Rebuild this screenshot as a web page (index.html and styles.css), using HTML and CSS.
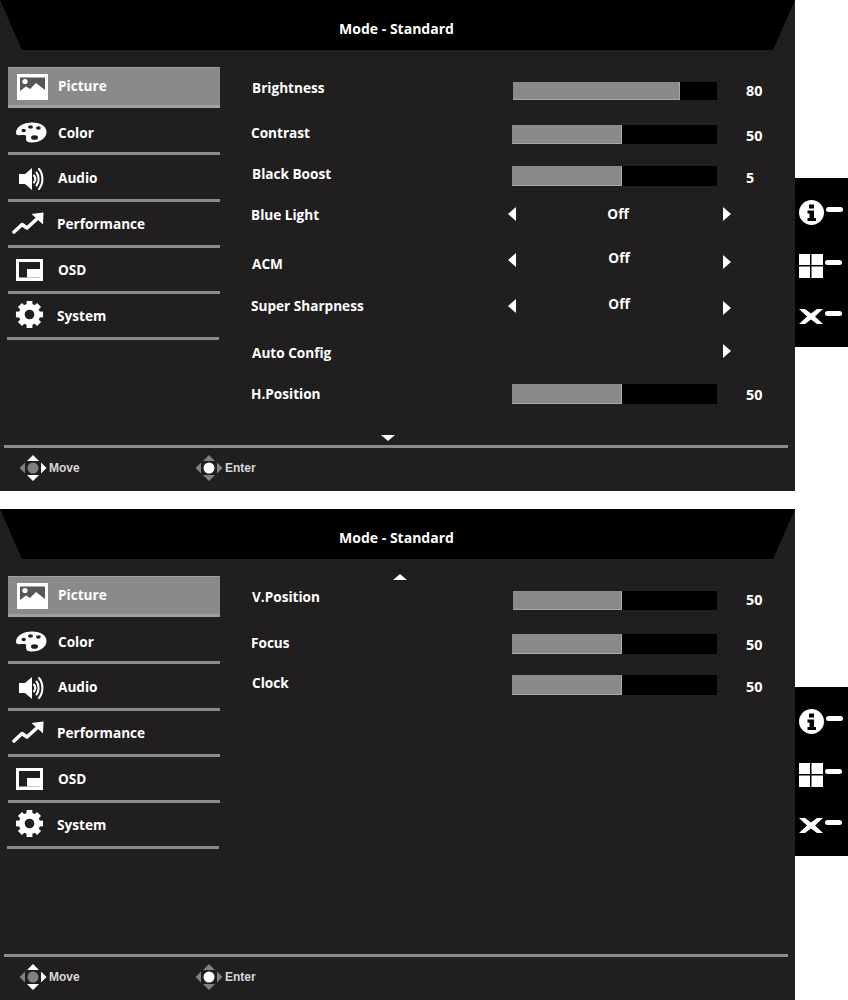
FILE: index.html
```html
<!DOCTYPE html>
<html lang="en">
<head>
<meta charset="utf-8">
<title>Monitor OSD - Picture</title>
<link rel="stylesheet" href="styles.css">
</head>
<body>
<svg class="sprite" width="0" height="0" aria-hidden="true">
  <symbol id="i-picture" viewBox="0 0 31 26">
    <rect width="31" height="26" fill="#fff"/>
    <rect x="3" y="3.500" width="25" height="15" fill="#55565a"/>
    <circle cx="8" cy="7.500" r="2.600" fill="#fff"/>
    <path d="M3 17 9 12.500 13 15 19 9 28 16V23H3Z" fill="#fff"/>
  </symbol>
  <symbol id="i-palette" viewBox="0 0 32 21">
    <path fill-rule="evenodd" fill="#fff" d="M1 11C1 5 8 .5 17 .5 26 .5 31.500 4.500 31.500 10 31.500 16 25 20.500 17 20.500 13.500 20.500 11 19.500 11 17 11 14.500 12 13.500 9.500 13 6.500 12.500 1 14.500 1 11ZM6.500 8.500a2.200 1.800 0 1 0 4.400 0a2.200 1.800 0 1 0-4.400 0ZM13 5a2.500 1.800 0 1 0 5 0a2.500 1.800 0 1 0-5 0ZM21 6a2.400 1.800 0 1 0 4.800 0a2.400 1.800 0 1 0-4.800 0ZM16 15.500a3.500 2.300 0 1 0 7 0a3.500 2.300 0 1 0-7 0Z"/>
  </symbol>
  <symbol id="i-audio" viewBox="0 0 26 26">
    <path fill="#fff" d="M1 8H7L14 2V24L7 18H1Z"/>
    <g fill="none" stroke="#fff" stroke-width="2.100" stroke-linecap="round">
      <path d="M16 9.500C17.500 11.500 17.500 14.500 16 16.500"/>
      <path d="M18.500 6.500C21.300 10 21.300 16 18.500 19.500"/>
      <path d="M21 3C25.500 8.500 25.500 17.500 21 23"/>
    </g>
  </symbol>
  <symbol id="i-perf" viewBox="0 0 32 22">
    <path fill="none" stroke="#fff" stroke-width="3.600" stroke-linecap="round" stroke-linejoin="round" d="M2 20 10 12.500 15 16 27 5"/>
    <path fill="#fff" d="M19.500 2 31.500 .5 31 12.500Z"/>
  </symbol>
  <symbol id="i-osd" viewBox="0 0 27 22">
    <path fill="#fff" fill-rule="evenodd" d="M0 0H27V22H0ZM3 3V18.500H24V3Z"/>
    <rect x="11" y="10" width="13" height="8.500" fill="#fff"/>
  </symbol>
  <symbol id="i-gear" viewBox="0 0 30 30">
    <circle cx="15" cy="15" r="8" fill="none" stroke="#fff" stroke-width="6"/>
    <g fill="#fff">
      <rect x="12" y="1" width="6" height="6"/>
      <rect x="12" y="23" width="6" height="6"/>
      <rect x="1" y="12" width="6" height="6"/>
      <rect x="23" y="12" width="6" height="6"/>
      <rect x="12" y="1" width="6" height="6" transform="rotate(45 15 15)"/>
      <rect x="12" y="23" width="6" height="6" transform="rotate(45 15 15)"/>
      <rect x="1" y="12" width="6" height="6" transform="rotate(45 15 15)"/>
      <rect x="23" y="12" width="6" height="6" transform="rotate(45 15 15)"/>
    </g>
  </symbol>
  <symbol id="i-info" viewBox="0 0 25 25">
    <circle cx="12.500" cy="12.500" r="12.500" fill="#fff"/>
    <rect x="10" y="4.500" width="5" height="4" fill="#000"/>
    <path fill="#000" d="M8.500 10.500H15V18H17V21H8.500V18H10.500V13.500H8.500Z"/>
  </symbol>
  <symbol id="i-grid" viewBox="0 0 24 24">
    <path fill="#fff" d="M0 0H11V11H0ZM12.500 0H24V11H12.500ZM0 12.500H11V24H0ZM12.500 12.500H24V24H12.500Z"/>
  </symbol>
  <symbol id="i-close" viewBox="0 0 24 15">
    <path fill="#fff" d="M0 0H6L12 4.500 18 0H24L16 7.500 24 15H18L12 10.500 6 15H0L8 7.500Z"/>
  </symbol>
  <symbol id="i-move" viewBox="0 0 28 28">
    <path fill="#fff" d="M14 1 20 7H8ZM14 27 8 21H20ZM27.500 14 22 8.500V19.500Z"/>
    <path fill="#808080" d="M.5 14 6 8.500V19.500Z"/>
    <circle cx="14" cy="14" r="5.500" fill="#808080"/>
  </symbol>
  <symbol id="i-enter" viewBox="0 0 28 28">
    <path fill="#808080" d="M14 1 20 7H8ZM14 27 8 21H20ZM27.500 14 22 8.500V19.500ZM.5 14 6 8.500V19.500Z"/>
    <circle cx="14" cy="14" r="5.500" fill="#fff"/>
  </symbol>
</svg>

<section class="shot">
  <div class="panel">
    <header class="title"><h1 class="title-text">Mode - Standard</h1></header>
    <div class="main">
      <nav class="menu">
        <div class="item selected"><svg class="ic ic-picture"><use href="#i-picture"/></svg><span>Picture</span></div>
        <div class="item it-color"><svg class="ic ic-palette"><use href="#i-palette"/></svg><span>Color</span></div>
        <div class="item it-audio"><svg class="ic ic-audio"><use href="#i-audio"/></svg><span>Audio</span></div>
        <div class="item it-perf"><svg class="ic ic-perf"><use href="#i-perf"/></svg><span>Performance</span></div>
        <div class="item it-osd"><svg class="ic ic-osd"><use href="#i-osd"/></svg><span>OSD</span></div>
        <div class="item it-sys"><svg class="ic ic-gear"><use href="#i-gear"/></svg><span>System</span></div>
      </nav>
      <div class="settings">
        <div class="row r-bright"><span class="label l1 up3">Brightness</span><div class="bar b1"><div class="fill f80"></div></div><span class="val">80</span></div>
        <div class="row r-contrast"><span class="label up1h">Contrast</span><div class="bar b2"><div class="fill f50"></div></div><span class="val down1h">50</span></div>
        <div class="row r-black"><span class="label l1 up2">Black Boost</span><div class="bar"><div class="fill f50"></div></div><span class="val down2">5</span></div>
        <div class="row r-blue"><span class="label down1">Blue Light</span><div class="opt"><i class="tri left"></i><span class="off">Off</span><i class="tri right"></i></div></div>
        <div class="row r-acm"><span class="label l1 down4">ACM</span><div class="opt"><i class="tri left"></i><span class="off off-shift up2">Off</span><i class="tri right down2"></i></div></div>
        <div class="row r-super"><span class="label">Super Sharpness</span><div class="opt"><i class="tri left"></i><span class="off off-shift up2">Off</span><i class="tri right down2"></i></div></div>
        <div class="row r-auto"><span class="label l1 down2">Auto Config</span><div class="opt"><i class="tri right alone"></i></div></div>
        <div class="row r-hpos"><span class="label">H.Position</span><div class="bar"><div class="fill f50"></div></div><span class="val down1">50</span></div>
        <i class="more more-down"></i>
      </div>
    </div>
    <footer class="foot">
      <div class="hint hint-move"><svg class="pad"><use href="#i-move"/></svg><span>Move</span></div>
      <div class="hint hint-enter"><svg class="pad"><use href="#i-enter"/></svg><span>Enter</span></div>
    </footer>
  </div>
  <aside class="keys">
    <div class="key k1"><svg class="k-ic k-info"><use href="#i-info"/></svg><b class="dash"></b></div>
    <div class="key k2"><svg class="k-ic k-grid"><use href="#i-grid"/></svg><b class="dash"></b></div>
    <div class="key k3"><svg class="k-ic k-close"><use href="#i-close"/></svg><b class="dash"></b></div>
  </aside>
</section>

<section class="shot second">
  <div class="panel">
    <header class="title"><h1 class="title-text">Mode - Standard</h1></header>
    <div class="main">
      <nav class="menu">
        <div class="item selected"><svg class="ic ic-picture"><use href="#i-picture"/></svg><span>Picture</span></div>
        <div class="item it-color"><svg class="ic ic-palette"><use href="#i-palette"/></svg><span>Color</span></div>
        <div class="item it-audio"><svg class="ic ic-audio"><use href="#i-audio"/></svg><span>Audio</span></div>
        <div class="item it-perf"><svg class="ic ic-perf"><use href="#i-perf"/></svg><span>Performance</span></div>
        <div class="item it-osd"><svg class="ic ic-osd"><use href="#i-osd"/></svg><span>OSD</span></div>
        <div class="item it-sys"><svg class="ic ic-gear"><use href="#i-gear"/></svg><span>System</span></div>
      </nav>
      <div class="settings settings-scrolled">
        <i class="more more-up"></i>
        <div class="row r-vpos"><span class="label l1 up4">V.Position</span><div class="bar b3"><div class="fill f50b"></div></div><span class="val val-up">50</span></div>
        <div class="row r-focus"><span class="label up1">Focus</span><div class="bar"><div class="fill f50"></div></div><span class="val down1">50</span></div>
        <div class="row r-clock"><span class="label l1 up2">Clock</span><div class="bar"><div class="fill f50"></div></div><span class="val down2">50</span></div>
      </div>
    </div>
    <footer class="foot">
      <div class="hint hint-move"><svg class="pad"><use href="#i-move"/></svg><span>Move</span></div>
      <div class="hint hint-enter"><svg class="pad"><use href="#i-enter"/></svg><span>Enter</span></div>
    </footer>
  </div>
  <aside class="keys">
    <div class="key k1"><svg class="k-ic k-info"><use href="#i-info"/></svg><b class="dash"></b></div>
    <div class="key k2"><svg class="k-ic k-grid"><use href="#i-grid"/></svg><b class="dash"></b></div>
    <div class="key k3"><svg class="k-ic k-close"><use href="#i-close"/></svg><b class="dash"></b></div>
  </aside>
</section>
</body>
</html>
```
FILE: styles.css
```css
* { box-sizing: border-box; }
html, body { margin: 0; padding: 0; background: #fff; }
body { width: 848px; height: 1000px; overflow: hidden; font-family: "Open Sans", "Liberation Sans", sans-serif; color: #fff; }
.sprite { display: block; width: 0; height: 0; }

.shot { display: flex; align-items: flex-start; height: 491px; }
.second { margin-top: 18px; }
.panel { width: 795px; height: 491px; background: #211e1f; display: flex; flex-direction: column; }

.title { height: 50px; background: #000; clip-path: polygon(0 0, 100% 0, 773px 100%, 22px 100%); display: flex; justify-content: center; align-items: center; padding: 8px 2px 0 0; flex: none; }
.title-text { margin: 0; font-size: 14px; font-weight: 700; line-height: 20px; }

.main { flex: 1; display: flex; min-height: 0; }
.menu { width: 252px; padding: 17px 0 0 8px; flex: none; font-size: 13.6px; font-weight: 700; }
.item { width: 212px; height: 46px; display: flex; align-items: center; border-bottom: 3px solid #8a8a8a; }
.item span { line-height: 20px; }
.selected { height: 41px; background: #8a8a8a; border-bottom-color: #a0a0a0; border-top: 1px solid #a0a0a0; padding-bottom: 1px; }
.it-color, .it-audio { height: 47px; }
.ic { display: block; flex: none; }
.ic-picture { width: 31px; height: 26px; margin: 2px 10px 0 9px; }
.ic-palette { width: 32px; height: 21px; margin: 4px 11px 0 7px; }
.it-color span { margin-top: 6px; }
.it-audio span { margin-top: 2px; }
.ic-audio { width: 26px; height: 26px; margin: 3px 14px 0 10px; }
.ic-perf { width: 32px; height: 22px; margin: 0 13px 2px 4px; }
.ic-osd { width: 27px; height: 22px; margin: 0 15px 0 8px; }
.ic-gear { width: 29px; height: 29px; margin: 0 13px 2px 8px; }
.it-sys { margin-left: -1px; }

.settings { flex: 1; padding-top: 18px; font-size: 13.6px; font-weight: 700; }
.settings-scrolled { padding-top: 15px; }
.row { display: flex; align-items: center; }
.row > .label, .row .off, .val { line-height: 20px; }
.label { width: 260px; flex: none; margin-left: -1px; margin-right: 1px; }
.l1 { margin-left: 0; margin-right: 0; }
.bar { width: 205px; height: 20px; background: #000; flex: none; }
.fill { height: 100%; background: #8a8a8a; border-right: 1px solid #a8a8a8; border-bottom: 1px solid #a8a8a8; }
.f80 { width: 167px; }
.f50 { width: 110px; }
.f50b { width: 109px; }
.b1 { width: 204px; height: 18px; margin-left: 1px; }
.b2 { height: 19px; }
.b3 { width: 204px; height: 19px; margin-left: 1px; }
.val { margin-left: 29px; font-size: 14.4px; }
.val-up { margin-bottom: 1px; }
.opt { width: 223px; height: 20px; display: flex; align-items: center; flex: none; margin-left: -4px; }
.off { flex: 1; text-align: center; padding-right: 3px; }
.off-shift { padding-right: 1px; }
.tri { display: block; width: 0; height: 0; border-top: 7px solid transparent; border-bottom: 7px solid transparent; flex: none; }
.left { border-right: 8px solid #fff; }
.right { border-left: 8px solid #fff; }
.alone { margin-left: auto; }

/* Offsets inside a centred row: a margin on one side moves the item by half its value. */
.up1 { margin-bottom: 2px; }
.up1h { margin-bottom: 3px; }
.up2 { margin-bottom: 4px; }
.up3 { margin-bottom: 6px; }
.up4 { margin-bottom: 8px; }
.down1 { margin-top: 2px; }
.down1h { margin-top: 3px; }
.down2 { margin-top: 4px; }
.down4 { margin-top: 8px; }

.r-bright { height: 46px; }
.r-contrast { height: 41px; }
.r-black { height: 42px; }
.r-blue { height: 34px; }
.r-acm { height: 58px; }
.r-super { height: 34px; }
.r-auto { height: 56px; }
.r-hpos { height: 30px; }
.r-vpos { height: 41px; }
.r-focus { height: 46px; }
.r-clock { height: 36px; }

.more { display: block; width: 0; height: 0; border-left: 7px solid transparent; border-right: 7px solid transparent; }
.more-down { border-top: 6px solid #fff; margin: 26px 0 0 129px; }
.more-up { border-bottom: 6px solid #fff; margin: 0 0 0 141px; }

.foot { height: 46px; flex: none; margin: 0 7px 0 4px; padding-bottom: 3px; border-top: 3px solid #8a8a8a; display: flex; align-items: center; font-family: "Liberation Sans", Arial, sans-serif; font-size: 12px; font-weight: 700; color: #d8d8d8; }
.hint { display: flex; align-items: center; }
.pad { width: 28px; height: 28px; display: block; flex: none; }
.hint-move { margin-left: 15px; width: 176px; gap: 2px; }
.hint-move span { margin-bottom: 1px; }
.hint-enter { gap: 2px; }

.keys { width: 53px; height: 169px; margin-top: 178px; background: #000; flex: none; padding: 22px 6px 0 4px; }
.key { display: flex; align-items: flex-start; }
.k-ic { display: block; flex: none; }
.k-info { width: 25px; height: 25px; }
.k-grid { width: 24px; height: 24px; }
.k-close { width: 24px; height: 15px; }
.dash { display: block; width: 17px; height: 5px; border-radius: 3px; background: #fff; flex: none; }
.k1 .dash { margin: 7px 0 0 2px; }
.k2 { margin-top: 29px; }
.k2 .dash { margin: 6px 0 0 2px; }
.k3 { margin-top: 31px; }
.k3 .dash { margin: 2px 0 0 2px; }
```
